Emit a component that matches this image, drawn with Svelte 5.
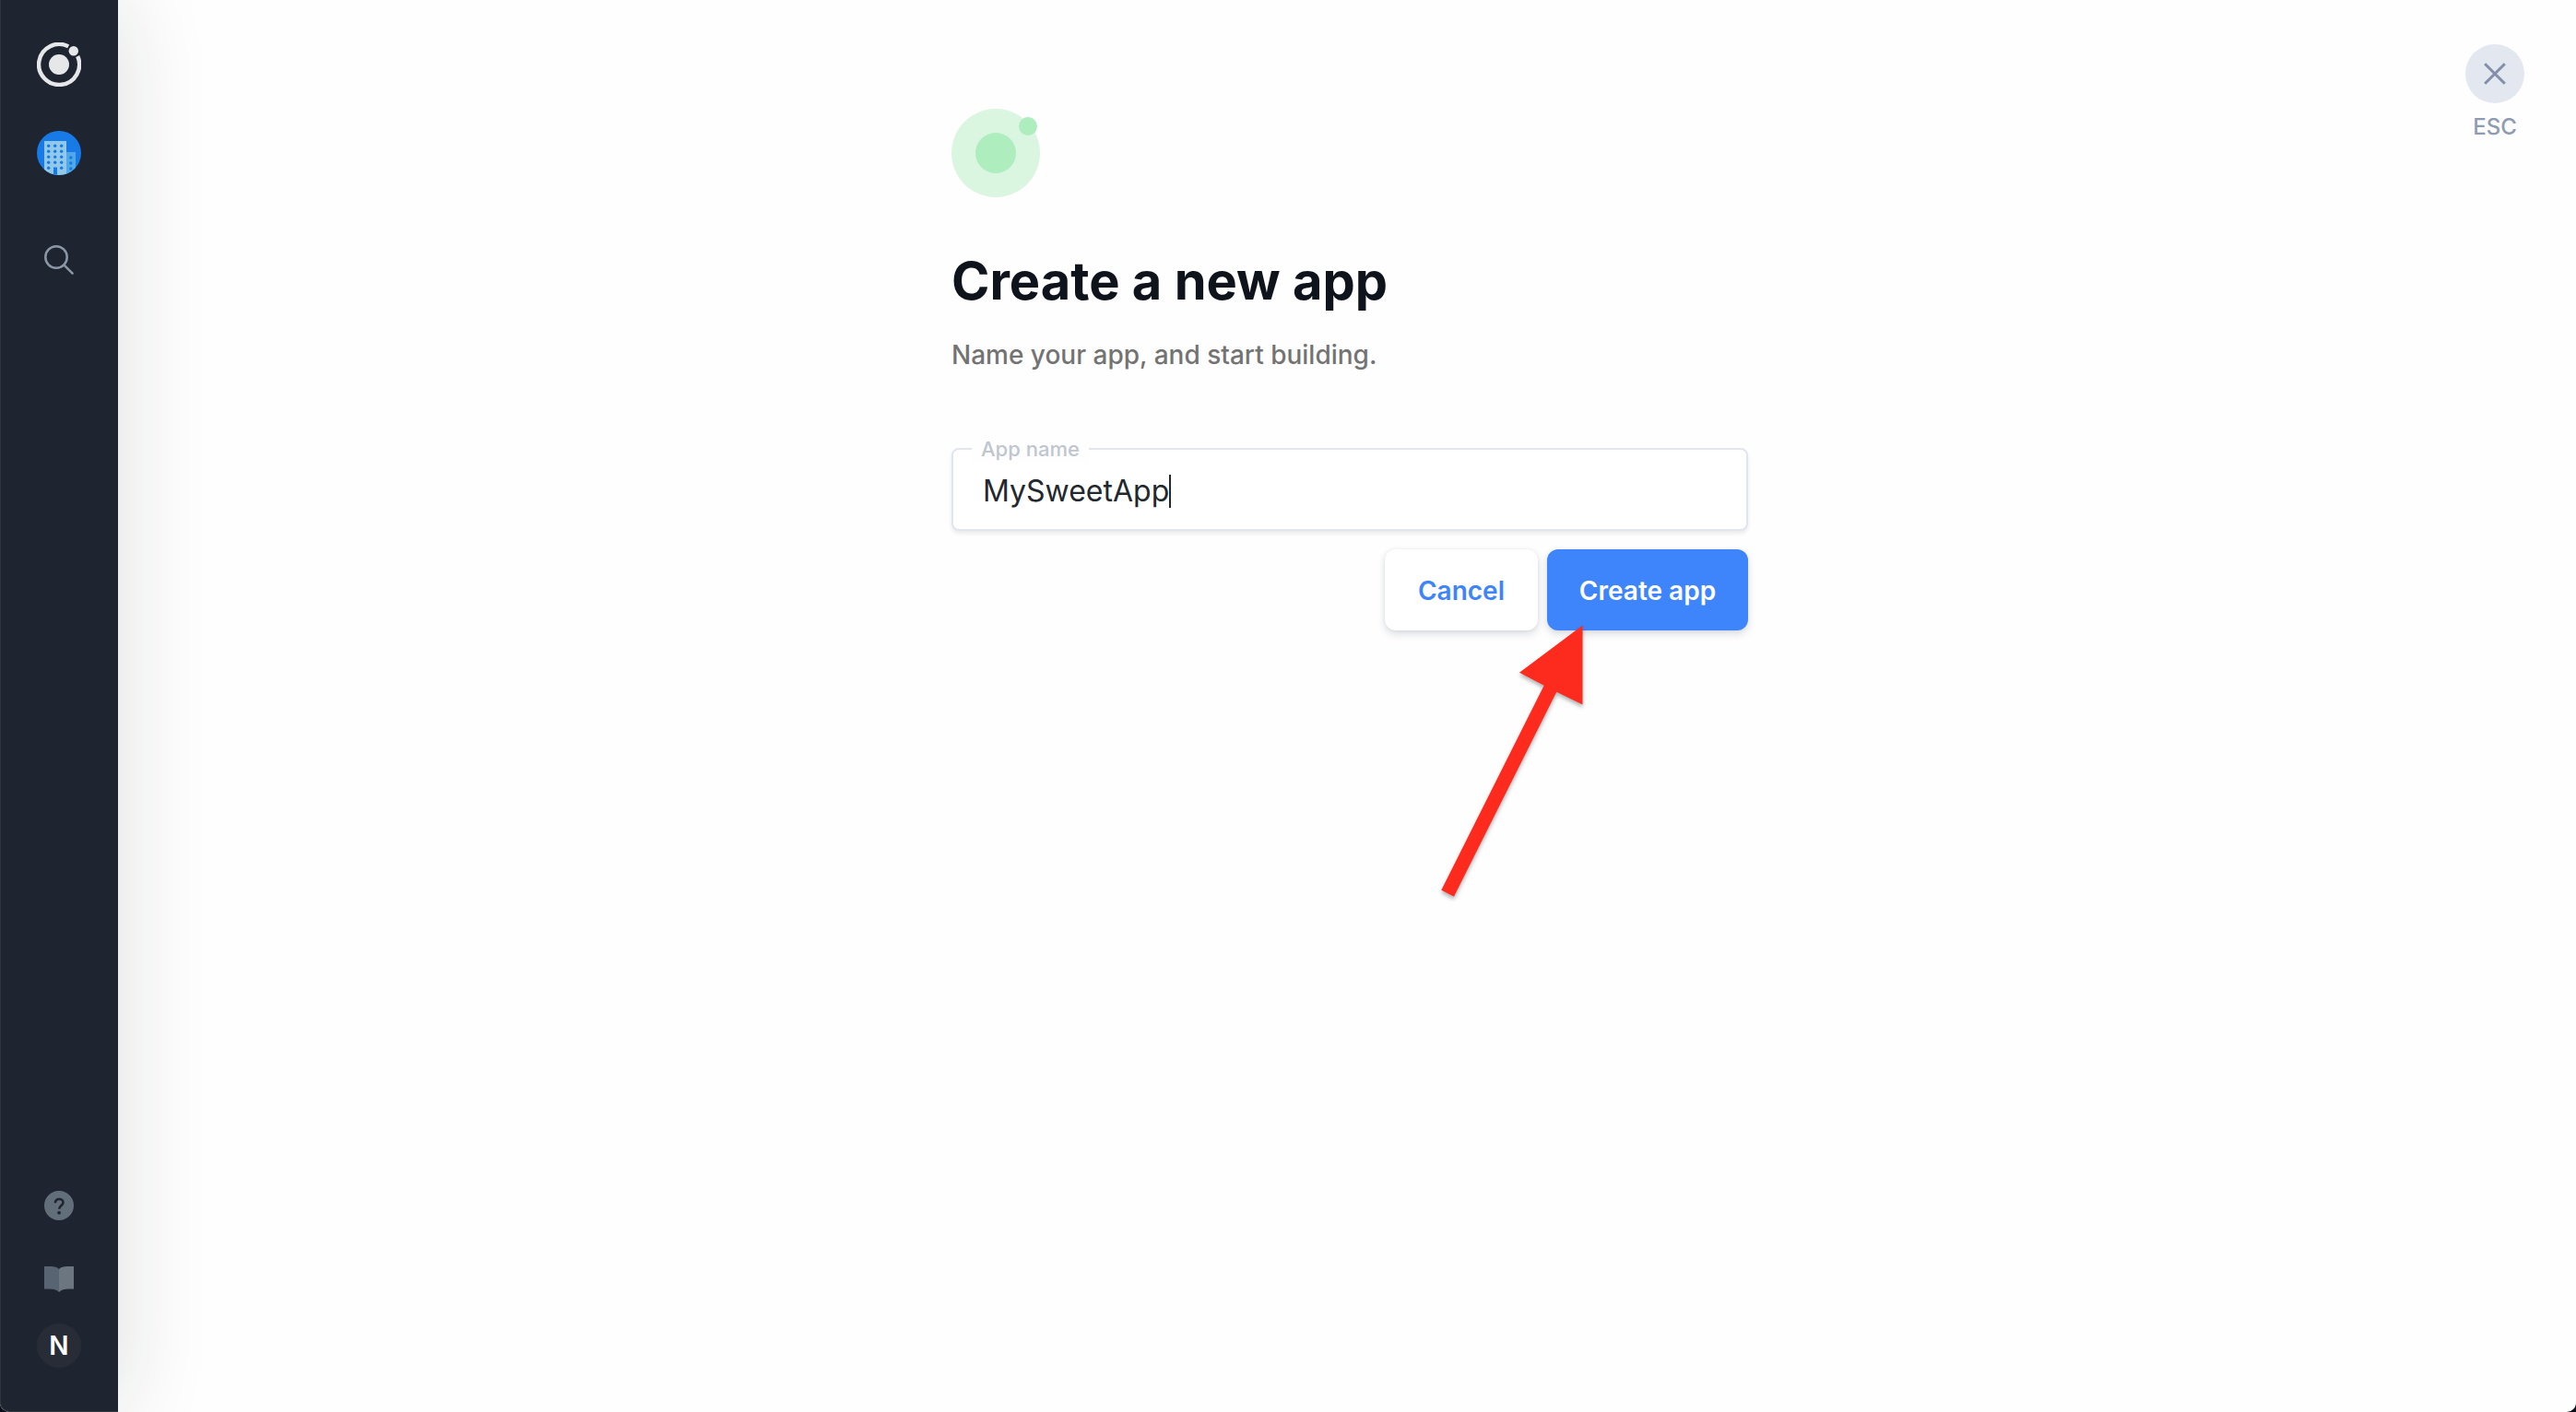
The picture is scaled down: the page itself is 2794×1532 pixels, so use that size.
<script>
  let appName = $state('MySweetApp');
  const floors = [16, 22, 28, 34, 40];
</script>

<div class="page">
  <nav class="rail" aria-label="Main">
    <div class="group">
      <a class="item logo" href="#home" aria-label="Home">
        <svg viewBox="0 0 48 48" width="48" height="48">
          <path d="M34.2 4.400A22 22 0 1 0 44.200 15" fill="none" stroke="#e6e7e9" stroke-width="4.4" />
          <circle cx="24" cy="24" r="11" fill="#e6e7e9" />
          <circle cx="39.8" cy="9.2" r="5.2" fill="#e6e7e9" />
        </svg>
      </a>
      <a class="item org" href="#org" aria-label="Organization">
        <svg viewBox="0 0 48 48" width="48" height="48">
          <defs><clipPath id="disc"><circle cx="24" cy="24" r="24" /></clipPath></defs>
          <g clip-path="url(#disc)">
            <rect width="48" height="48" fill="#187ae6" />
            <rect x="32" y="23" width="10" height="25" fill="#51a8e8" />
            <rect x="8" y="11" width="24" height="37" fill="#93c9e8" />
            <rect x="18" y="39.5" width="4" height="9" fill="#187ae6" />
            {#each floors as y}
              {#each [13, 20, 27] as x}
                {#if !(x === 20 && y === 40)}
                  <circle cx={x - 0.3} cy={y + 0.3} r="1.7" fill="#187ae6" />
                {/if}
              {/each}
            {/each}
            {#each [29, 35, 41] as y}
              <circle cx="36.8" cy={y} r="1.7" fill="#187ae6" />
            {/each}
          </g>
        </svg>
      </a>
      <button class="item search" aria-label="Search">
        <svg viewBox="0 0 32 32" width="32" height="32" fill="none" stroke="#8b97a5" stroke-width="2.5" stroke-linecap="round">
          <circle cx="13" cy="13" r="11.7" />
          <path d="M21.3 21.3L30.6 30.6" />
        </svg>
      </button>
    </div>
    <div class="group">
      <a class="item help" href="#help" aria-label="Help">
        <svg viewBox="0 0 32 32" width="32" height="32">
          <circle cx="16" cy="16" r="16" fill="#636e7b" />
          <path d="M11.9 13.2C11.9 10.6 13.6 9 16.2 9C18.7 9 20.5 10.5 20.5 12.7C20.5 16 16.2 15.9 16.2 19.7" fill="none" stroke="#1f2530" stroke-width="2.6" />
          <circle cx="16.1" cy="23.8" r="1.9" fill="#1f2530" />
        </svg>
      </a>
      <a class="item docs" href="#docs" aria-label="Documentation">
        <svg viewBox="0 0 32 28" width="32" height="28">
          <path d="M0 0H7C11 0 14 .8 16 3V28C13.500 25.300 10 24.600 6 24.600H0Z" fill="#586472" />
          <path d="M32 0H25C21 0 18 .8 16 3V28C18.500 25.300 22 24.600 26 24.600H32Z" fill="#6c7681" />
        </svg>
      </a>
      <button class="item avatar" aria-label="Account">N</button>
    </div>
  </nav>

  <main>
    <section class="panel">
      <svg class="mark" viewBox="0 0 96 96" width="96" height="96" aria-hidden="true">
        <circle cx="48" cy="48" r="48" fill="#daf6e1" />
        <circle cx="48" cy="48" r="22" fill="#adedbe" />
        <circle cx="83" cy="19" r="10" fill="#adedbe" />
      </svg>
      <h1>Create a new app</h1>
      <p>Name your app, and start building.</p>
      <form onsubmit={(e) => e.preventDefault()}>
        <div class="field">
          <label for="app-name">App name</label>
          <input id="app-name" type="text" bind:value={appName} autocomplete="off" spellcheck="false" />
          <span class="caret"></span>
        </div>
        <div class="actions">
          <button type="button" class="cancel">Cancel</button>
          <button type="submit" class="create">Create app</button>
          <svg class="arrow" viewBox="1556 672 176 312" width="176" height="312" aria-hidden="true">
            <path d="M1716.500 678.500L1648 729.700L1674.700 743.700L1563.300 965.700L1577 972.700L1688.300 750.700L1716.500 764.500Z" fill="#fd2b1d" />
          </svg>
        </div>
      </form>
    </section>
    <button class="close">
      <span class="disc">
        <svg viewBox="0 0 24 24" width="24" height="24" fill="none" stroke="#838fa8" stroke-width="3">
          <path d="M1.200 1.200L22.800 22.800M22.800 1.200L1.200 22.800" />
        </svg>
      </span>
      <span>ESC</span>
    </button>
  </main>
</div>

<style>
  :global(body) {
    margin: 0;
    background: #0b0d1c;
  }
  .page {
    display: flex;
    min-height: 100vh;
    overflow: hidden;
    border-radius: 0 0 10px 10px;
    background: #fefefe;
    font-family: Inter, 'Liberation Sans', sans-serif;
  }
  button {
    border: 0;
    padding: 0;
    background: none;
    font: inherit;
    cursor: pointer;
  }
  svg {
    display: block;
  }
  .rail {
    box-sizing: border-box;
    flex: none;
    width: 128px;
    padding: 46px 0 48px;
    display: flex;
    flex-direction: column;
    justify-content: space-between;
    background: #1f2530;
    border-bottom-left-radius: 10px;
    box-shadow: inset 1px -1px #30353f, 0 0 100px rgba(20, 28, 40, 0.14);
  }
  .group {
    display: flex;
    flex-direction: column;
    align-items: center;
  }
  .org {
    margin-top: 48px;
  }
  .search {
    margin-top: 76px;
  }
  .docs {
    margin-top: 50px;
  }
  .avatar {
    margin-top: 34px;
    width: 48px;
    height: 48px;
    border-radius: 50%;
    background: #282c37;
    color: #fff;
    font-size: 28px;
    font-weight: 600;
    line-height: 48px;
  }
  main {
    flex: 1;
    position: relative;
    padding: 118px 0 60px 6px;
  }
  .panel {
    width: 864px;
    max-width: 100%;
    margin: 0 auto;
  }
  h1 {
    margin: 56px 0 0;
    font-size: 56px;
    line-height: 70px;
    font-weight: 700;
    color: #0f131b;
  }
  p {
    margin: 24px 0 0;
    font-size: 28px;
    line-height: 42px;
    font-weight: 500;
    color: #737373;
  }
  form {
    margin-top: 80px;
  }
  .field {
    position: relative;
    box-sizing: border-box;
    height: 90px;
    padding: 4px 32px 0;
    display: flex;
    align-items: center;
    border: 2px solid #e1e5ee;
    border-radius: 8px;
    background: #fff;
    box-shadow: 0 3px 4px rgba(0, 0, 0, 0.08);
  }
  label {
    position: absolute;
    left: 20px;
    top: -16px;
    padding: 0 10px;
    background: #fefefe;
    font-size: 22px;
    line-height: 30px;
    font-weight: 500;
    color: #c0c6d0;
  }
  input {
    field-sizing: content;
    border: 0;
    padding: 0;
    outline: 0;
    background: none;
    font: inherit;
    font-size: 32px;
    line-height: 44px;
    color: #23272e;
  }
  .caret {
    width: 2px;
    height: 36px;
    background: #23272e;
  }
  .actions {
    position: relative;
    display: flex;
    justify-content: flex-end;
    gap: 10px;
    margin-top: 20px;
  }
  .actions button {
    height: 88px;
    padding-top: 2px;
    border-radius: 12px;
    font-size: 28px;
    font-weight: 600;
    box-shadow: 0 4px 8px rgba(20, 35, 60, 0.15), 0 0 4px rgba(20, 35, 60, 0.06);
  }
  .actions .cancel {
    width: 166px;
    background: #fff;
    color: #3e84fb;
  }
  .actions .create {
    width: 218px;
    background: #3e84fb;
    color: #fff;
  }
  .arrow {
    position: absolute;
    right: 164px;
    top: 76px;
    pointer-events: none;
    filter: drop-shadow(0 3px 2px rgba(0, 0, 0, 0.3));
  }
  .close {
    position: absolute;
    top: 48px;
    right: 56px;
    display: flex;
    flex-direction: column;
    align-items: center;
    gap: 12px;
    font-size: 24px;
    line-height: 28px;
    font-weight: 500;
    color: #8f9bb3;
  }
  .disc {
    display: grid;
    place-items: center;
    width: 64px;
    height: 64px;
    border-radius: 50%;
    background: #e3e7f0;
  }
</style>
